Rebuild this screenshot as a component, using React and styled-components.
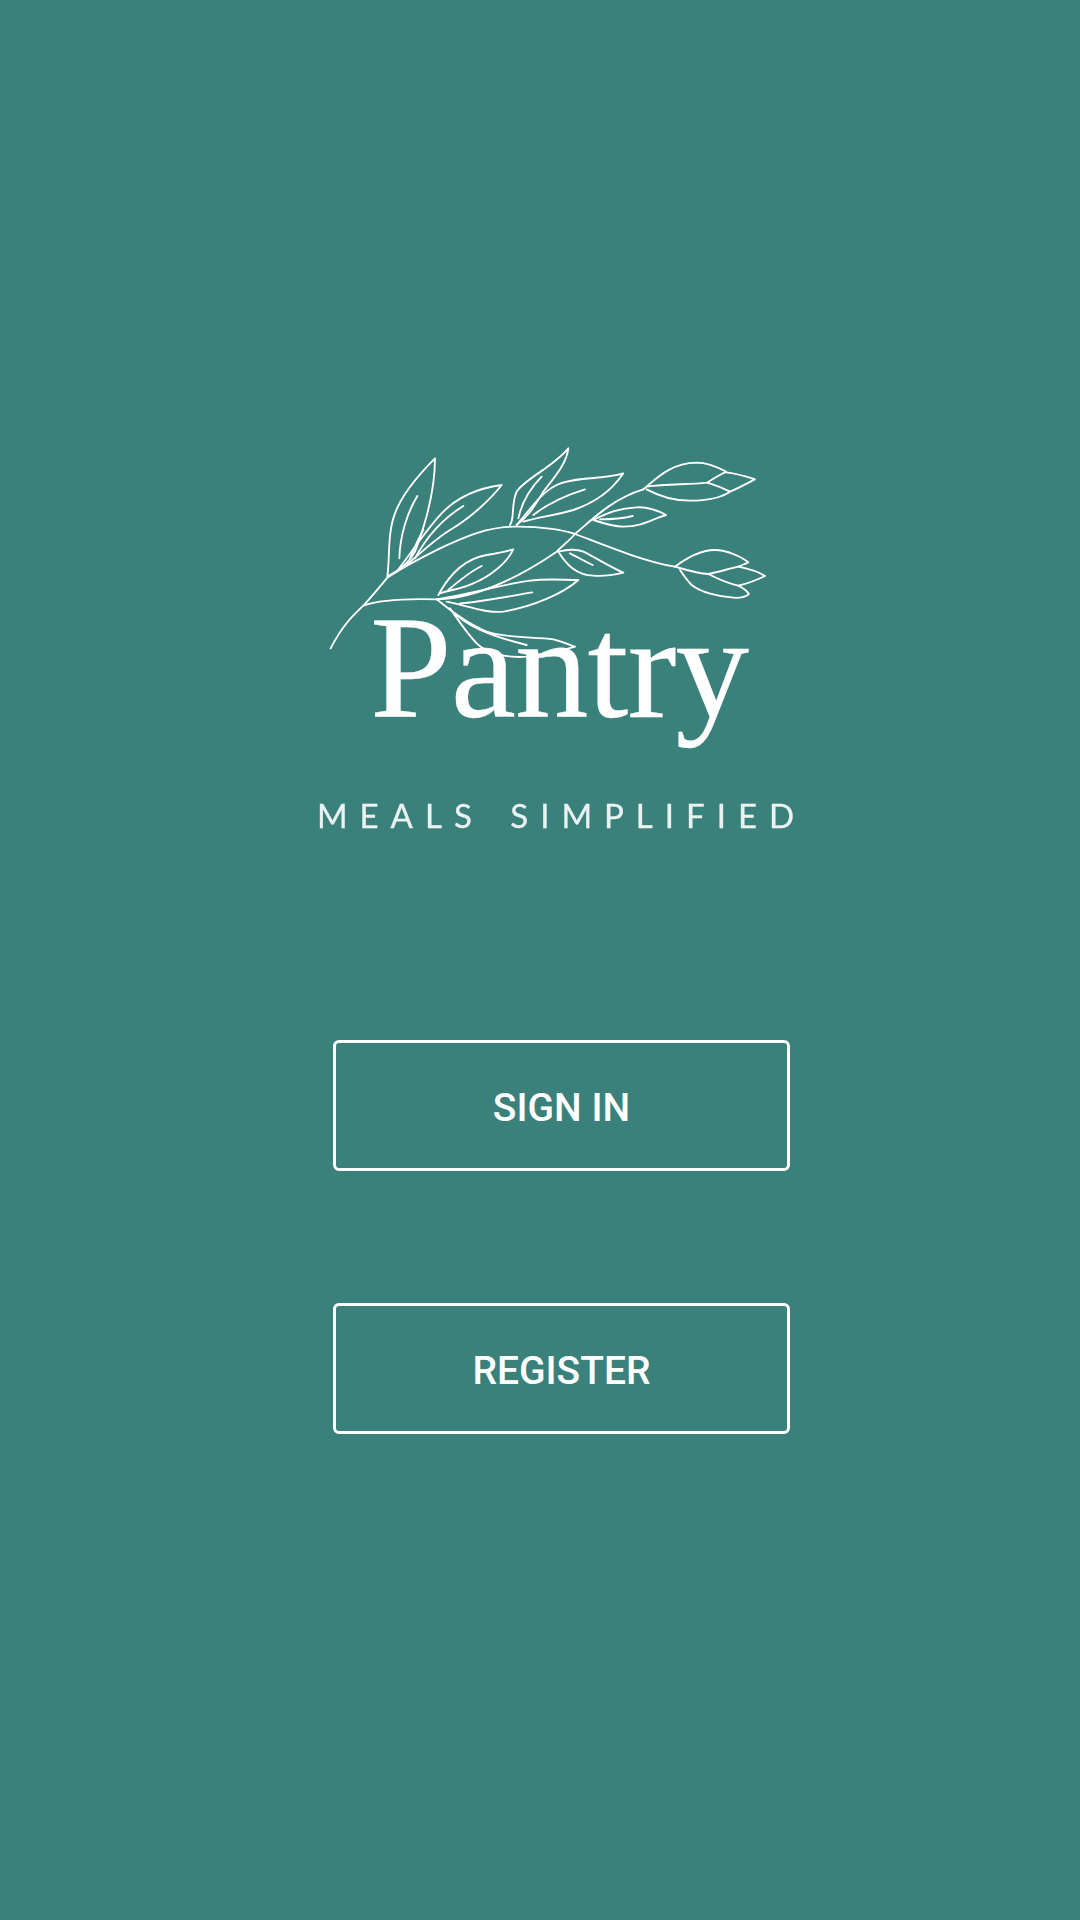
import React from 'react';
import styled, { createGlobalStyle } from 'styled-components';

const GlobalStyle = createGlobalStyle`
    html, body {
        margin: 0;
        padding: 0;
        background: #3a807b;
    }
`

const Page = styled.main`
    box-sizing: border-box;
    width: 1080px;
    height: 1920px;
    padding: 430px 0 0 43px;
    display: flex;
    flex-direction: column;
    align-items: center;
    background: #3a807b;
`

const Logo = styled.div`
    position: relative;
    box-sizing: border-box;
    width: 523px;
    height: 610px;
    padding-top: 164px;
    color: #fff;
    filter: blur(0.7px);
`

const Sprig = styled.svg`
    position: absolute;
    left: 0;
    top: 0;
    width: 500px;
    height: 300px;
    fill: none;
    stroke: #fff;
    stroke-width: 5.6;
    stroke-linecap: round;
    stroke-linejoin: round;
`

const Wordmark = styled.h1`
    margin: 0;
    padding-right: 5px;
    font-family: 'Liberation Serif', serif;
    font-weight: 400;
    font-size: 147px;
    line-height: 147px;
    letter-spacing: -1px;
    text-align: center;
    -webkit-text-stroke: 0.3px #fff;
`

const Tagline = styled.p`
    margin: 54px 0 0;
    font-family: 'Lato', sans-serif;
    font-weight: 400;
    font-size: 33px;
    line-height: 40px;
    letter-spacing: 12px;
    word-spacing: 6px;
    text-align: center;
    white-space: nowrap;
    opacity: 0.9;
    -webkit-text-stroke: 0.3px #fff;
`

const Actions = styled.div`
    display: flex;
    flex-direction: column;
    gap: 132px;
`

const OutlineButton = styled.button`
    box-sizing: border-box;
    width: 457px;
    height: 131px;
    padding: 5px 0 0;
    border: 3px solid #fff;
    border-radius: 6px;
    background: transparent;
    color: #fff;
    font-family: 'Roboto', sans-serif;
    font-weight: 500;
    font-size: 39px;
    cursor: pointer;
`

function SprigDrawing() {
    return (
        <Sprig viewBox="0 0 1500 900" aria-hidden="true">
            {/* stems */}
            <path d="M92 655C125 590 155 560 190 527C215 500 240 470 262 443C310 410 360 385 420 355C500 318 560 292 640 290C720 288 790 300 825 312C900 340 1030 395 1125 410" />
            <path d="M190 527C230 512 310 505 410 508C530 505 660 440 770 365C790 345 810 330 825 312C880 265 940 205 1030 178" />
            {/* left leaves */}
            <path d="M262 440C270 380 262 310 285 250C305 195 360 130 405 85C405 170 385 260 345 365C330 395 300 420 262 440" />
            <path d="M298 385C300 320 320 250 352 198M330 385C345 350 355 325 370 300" />
            <path d="M290 425C340 360 385 290 430 245C470 205 530 175 605 165C570 210 510 265 450 300C410 325 370 360 320 405" />
            <path d="M345 385C380 320 430 265 490 228" />
            {/* top middle leaves */}
            <path d="M630 285C645 265 632 225 650 185C670 150 760 110 805 55C800 100 765 140 730 185C705 225 690 255 650 285" />
            <path d="M655 265C665 220 690 175 725 140" />
            <path d="M650 285C690 240 720 190 770 165C820 140 900 150 970 130C930 190 880 220 820 240C770 255 720 260 670 275" />
            <path d="M700 255C750 215 800 195 855 178" />
            {/* lower leaves */}
            <path d="M415 495C450 430 500 385 560 375C590 370 615 365 640 358C620 400 570 440 520 460C490 475 450 480 420 490" />
            <path d="M445 480C480 450 510 425 545 408" />
            <path d="M410 508C500 495 600 465 690 452C740 445 790 450 835 450C790 490 700 530 610 545C560 550 510 530 440 515" />
            <path d="M480 520C550 515 620 500 697 487" />
            <path d="M410 508C450 540 500 580 560 605C620 625 700 620 760 628C790 635 810 645 825 650C780 665 730 670 680 680C620 685 560 670 530 640C500 610 475 570 450 535" />
            <path d="M470 555C520 600 600 625 680 645" />
            {/* small right leaves */}
            <path d="M880 270C930 245 960 235 1010 232C1050 230 1080 245 1098 255C1060 265 1030 290 970 290C940 290 910 280 880 270" />
            <path d="M900 268C940 268 970 265 998 258" />
            <path d="M775 365C800 405 830 435 880 437C910 440 940 435 970 428C930 410 890 385 850 365C825 355 800 360 775 365" />
            <path d="M810 370C830 380 855 395 878 405" />
            {/* buds */}
            <path d="M1030 178C1070 145 1110 100 1190 98C1220 98 1250 110 1278 125C1260 135 1240 145 1222 158C1160 165 1100 160 1040 170" />
            <path d="M1278 127C1310 130 1340 140 1365 148C1340 160 1315 175 1290 185C1260 205 1210 212 1170 212C1120 212 1080 200 1040 178" />
            <path d="M1222 158C1245 165 1270 175 1290 185" />
            <path d="M1125 410C1160 385 1200 360 1245 360C1280 360 1325 380 1345 397C1335 402 1325 405 1315 410C1340 415 1375 425 1395 438C1370 450 1345 460 1315 467C1325 472 1340 482 1347 492C1340 500 1320 505 1300 503C1250 500 1200 485 1175 465C1160 450 1150 435 1140 420" />
            <path d="M1125 410C1160 420 1190 430 1225 432C1260 425 1290 415 1315 410M1225 432C1250 445 1285 460 1315 467" />
        </Sprig>
    )
}

export default function App() {
    return (
        <>
            <GlobalStyle />
            <Page>
                <Logo>
                    <Wordmark>Pantry</Wordmark>
                    <Tagline>MEALS SIMPLIFIED</Tagline>
                    <SprigDrawing />
                </Logo>
                <Actions>
                    <OutlineButton type="button">SIGN IN</OutlineButton>
                    <OutlineButton type="button">REGISTER</OutlineButton>
                </Actions>
            </Page>
        </>
    )
}
